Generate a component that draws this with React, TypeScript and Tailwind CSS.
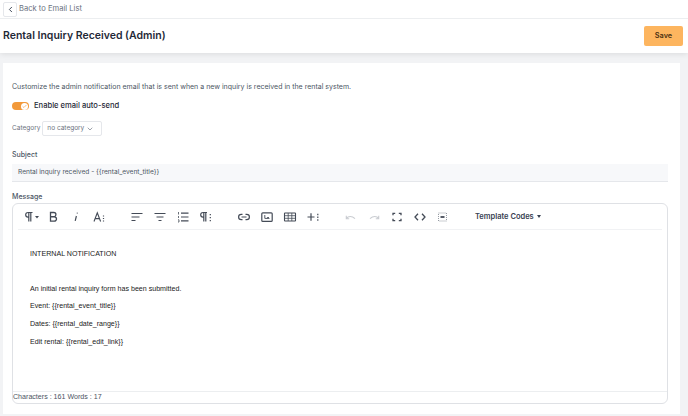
import { Check, ChevronDown, ChevronLeft } from "lucide-react";

const ink = "#444b57";

function Glyph({ x, w = 16, children }: { x: number; w?: number; children: React.ReactNode }) {
  return (
    <span className="flex shrink-0 items-center justify-center" style={{ marginLeft: x, width: w }}>
      <svg width={w} height="14" viewBox={`0 0 ${w} 14`} fill="none" stroke={ink} strokeWidth="1.1">
        {children}
      </svg>
    </span>
  );
}

function Toolbar() {
  return (
    <div className="mx-[5px] flex h-[26px] items-center border-b border-[#f1f2f4] text-[#374151]">
      <Glyph x={5}>
        <path d="M7.500 2.500H5a2.300 2.300 0 0 0 0 4.600h1M5.800 2.500v9M7.800 2.500v9M4.500 2.500h5" strokeWidth="1.200" />
        <path d="M12 6h4l-2 2.500z" fill={ink} stroke="none" />
      </Glyph>
      <Glyph x={6}>
        <path d="M5.500 2.500h3.300a2 2 0 0 1 0 4.200H5.500zM5.500 6.800h3.800a2.100 2.100 0 0 1 0 4.400H5.500z" strokeWidth="1.300" />
      </Glyph>
      <Glyph x={7}>
        <path d="M8.800 3.200h.8M8.400 6 7.200 10.800" strokeWidth="1.200" />
      </Glyph>
      <Glyph x={7}>
        <path d="M3 11.500 6.300 2.800 9.600 11.500M4.200 8.600h4.300" />
        <path d="M12.500 5.500v1M12.500 8v1M12.500 10.500v1" strokeWidth="1.200" />
      </Glyph>
      <Glyph x={22}>
        <path d="M2.500 3.500h11M2.500 7h8M2.500 10.500h4" strokeWidth="1.200" />
      </Glyph>
      <Glyph x={7}>
        <path d="M2.500 3.500h11M4.500 7h7M6.500 10.500h3" strokeWidth="1.200" />
      </Glyph>
      <Glyph x={7}>
        <path d="M6 3.200h7.500M6 7h7.500M6 10.800h7.500" strokeWidth="1.200" />
        <path d="M3.500 2v2.500M3.500 6v2M3 9.800h1v2.200H3" strokeWidth="0.800" />
      </Glyph>
      <Glyph x={7}>
        <path d="M6.500 2.500H5a2.300 2.300 0 0 0 0 4.600h.8M5.800 2.500v9M7.800 2.500v9M4.500 2.500h4.500" strokeWidth="1.200" />
        <path d="M12.300 4v1.300M12.300 7v1.300M12.300 10v1.300" strokeWidth="1.200" />
      </Glyph>
      <Glyph x={22}>
        <path d="M6.500 4.300H5.300a2.700 2.700 0 0 0 0 5.400h1.200M9.500 4.300h1.200a2.700 2.700 0 0 1 0 5.400H9.500M5.500 7h5" strokeWidth="1.200" />
      </Glyph>
      <Glyph x={7}>
        <rect x="2.800" y="2.800" width="10.400" height="8.600" rx="1" strokeWidth="1.200" />
        <path d="M5.800 5v3.400h4.400M8 8.400l1-1.400 1.200 1.400" strokeWidth="0.900" />
      </Glyph>
      <Glyph x={7}>
        <rect x="2.500" y="3" width="11" height="8" rx="0.500" />
        <path d="M2.500 5.700h11M2.500 8.300h11M6.200 3v8M9.800 3v8" strokeWidth="0.800" />
      </Glyph>
      <Glyph x={7}>
        <path d="M2.500 7h7M6 3.300v7.400" strokeWidth="1.200" />
        <path d="M12.800 3.800v1.400M12.800 6.500v1.400M12.800 9.300v1.400" strokeWidth="1.200" />
      </Glyph>
      <Glyph x={22}>
        <path d="M3.300 8.500c2-2.600 5.500-2.900 8.700.2M3.300 5.800v2.900h2.900" stroke="#c9ccd1" />
      </Glyph>
      <Glyph x={7}>
        <path d="M12.700 8.500c-2-2.600-5.500-2.900-8.700.2M12.700 5.800v2.900H9.800" stroke="#c9ccd1" />
      </Glyph>
      <Glyph x={7}>
        <path d="M4 5.200V3.300h2.200M9.800 3.300H12v1.900M12 8.800v1.900H9.800M6.200 10.700H4V8.800" strokeWidth="1.300" />
      </Glyph>
      <Glyph x={7}>
        <path d="M6 3.800 3 7l3 3.200M10 3.800 13 7l-3 3.200" strokeWidth="1.300" />
      </Glyph>
      <Glyph x={7}>
        <rect x="3.500" y="3" width="8" height="8" strokeDasharray="1 1" strokeWidth="0.800" stroke="#7b818b" />
        <path d="M5.500 7h4" strokeWidth="1.800" />
      </Glyph>
      <span className="ml-[24px] flex items-center gap-[3px] whitespace-nowrap text-[7.500px] font-semibold">
        Template Codes
        <span className="h-0 w-0 border-x-[2.500px] border-t-[3px] border-x-transparent border-t-[#374151]" />
      </span>
    </div>
  );
}

export default function App() {
  return (
    <div className="flex h-[416px] w-[688px] flex-col overflow-hidden bg-[#f2f3f5] font-['Inter',sans-serif]">
      <header className="bg-white shadow-[0_1px_6px_rgba(0,0,0,0.1)]">
        <div className="flex h-[19px] items-center gap-[2px] border-b border-[#eceef0] pl-[3px]">
          <span className="flex h-[15px] w-[14px] items-center justify-center rounded-[2px] border border-[#e5e7eb]">
            <ChevronLeft size={9} strokeWidth={2.500} color="#374151" />
          </span>
          <span className="text-[7.600px] text-[#6b7280]">Back to Email List</span>
        </div>
        <div className="flex h-[34px] items-center justify-between pl-[3px] pr-[5px]">
          <h1 className="text-[10.500px] font-semibold text-[#1f2937]">Rental Inquiry Received (Admin)</h1>
          <button className="flex h-[20px] w-[39px] items-center justify-center rounded-[2px] bg-[#fdb55f] text-[7.300px] font-semibold text-[#4b3112]">
            Save
          </button>
        </div>
      </header>

      <main className="mx-[3px] mb-[2px] mt-[10px] flex min-h-0 w-[677px] flex-1 flex-col bg-white px-[9px] pb-[10px] pt-[19px]">
        <p className="text-[7px] leading-[10px] text-[#4b5563]">
          Customize the admin notification email that is sent when a new inquiry is received in the rental system.
        </p>

        <div className="mt-[9px] flex h-[10px] items-center gap-[5px]">
          <span className="flex h-[8px] w-[17px] items-center justify-end rounded-full bg-[#f2993a] pr-[1px]">
            <span className="flex h-[7px] w-[7px] items-center justify-center rounded-full bg-white">
              <Check size={5} strokeWidth={3} color="#f2993a" />
            </span>
          </span>
          <span className="text-[7.600px] font-medium text-[#1f2937]">Enable email auto-send</span>
        </div>

        <div className="mt-[10px] flex items-center gap-[2px]">
          <span className="text-[6.500px] text-[#6b7280]">Category</span>
          <span className="flex h-[15px] w-[60px] items-center justify-between whitespace-nowrap rounded-[2px] border border-[#e5e7eb] pl-[4px] pr-[7px] text-[6.500px] text-[#6b7280]">
            no category
            <ChevronDown size={8} color="#6b7280" />
          </span>
        </div>

        <label className="mt-[14px] text-[7px] font-medium leading-[10px] text-[#4b5563]">Subject</label>
        <div className="mt-[4px] flex h-[18px] w-[656px] items-center border-b border-[#e5e7eb] bg-[#f7f8fa] pl-[6px] text-[6.600px] text-[#4b5563]">
          Rental inquiry received - {"{{rental_event_title}}"}
        </div>

        <label className="mt-[10px] text-[7px] font-medium leading-[10px] text-[#4b5563]">Message</label>
        <div className="mt-[1px] flex min-h-0 w-[656px] flex-1 flex-col rounded-[6px] border border-[#dfe1e5]">
          <Toolbar />
          <div className="flex-1 pl-[17px] pt-[19px] font-['Liberation_Sans',sans-serif] text-[7.100px] leading-[10px] text-[#222]">
            <p>INTERNAL NOTIFICATION</p>
            <p className="mt-[25px]">An initial rental inquiry form has been submitted.</p>
            <p className="mt-[7px]">Event: {"{{rental_event_title}}"}</p>
            <p className="mt-[8px]">Dates: {"{{rental_date_range}}"}</p>
            <p className="mt-[8px]">Edit rental: {"{{rental_edit_link}}"}</p>
          </div>
          <div className="flex h-[12px] items-center border-t border-[#eceef0] font-['Liberation_Sans',sans-serif] text-[7.100px] text-[#4b5563]">
            Characters : 161&nbsp;Words : 17
          </div>
        </div>
      </main>
    </div>
  );
}
